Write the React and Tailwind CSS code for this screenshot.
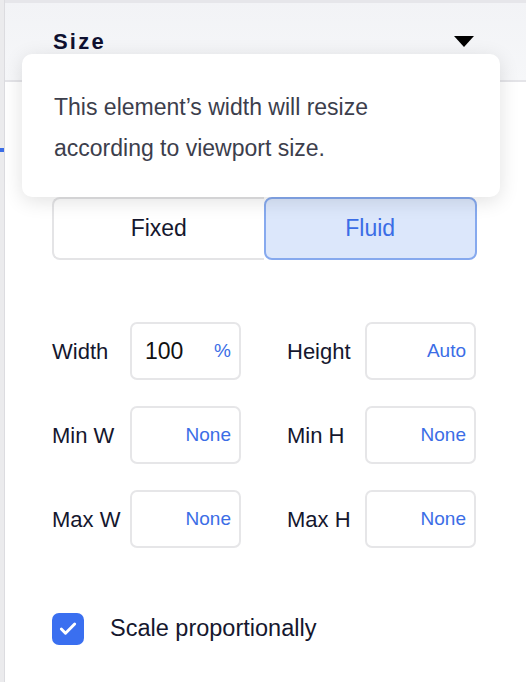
import { Check } from 'lucide-react'

function Field({ label, value, unit, placeholder }) {
  return (
    <div className="flex items-center">
      <span className="w-[78px] text-[22px] text-[#15172e]">{label}</span>
      <div className="flex h-[58px] w-[111px] items-center justify-between rounded-[7px] border-2 border-[#e6e6e8] bg-white pl-[13px] pr-[8px]">
        <span className="text-[23px] text-[#111]">{value}</span>
        <span className="text-[19px] text-[#3b6de6]">{unit || placeholder}</span>
      </div>
    </div>
  )
}

export default function App() {
  return (
    <div className="relative flex h-[682px] w-[526px] overflow-hidden bg-white font-['Liberation_Sans',Arial,sans-serif]">
      {/* left edge strip */}
      <div className="flex w-[4px] flex-col bg-[#ebebed]">
        <div className="mt-[148px] h-[4px] w-[4px] bg-[#3b6de6]" />
      </div>

      <div className="flex flex-1 flex-col border-l border-[#dcdce0]">
        {/* header */}
        <div className="flex h-[82px] items-center justify-between border-t-[3px] border-b-2 border-t-[#e6e6ea] border-b-[#e4e4e8] bg-gradient-to-b from-[#f2f3f6] to-[#f6f7f9] pl-[48px] pr-[52px]">
          <span className="text-[22px] font-bold tracking-[2.2px] text-[#0e1030]">Size</span>
          <svg width="20" height="11" viewBox="0 0 20 11">
            <path d="M0 0 H20 L10 11 Z" fill="#000" />
          </svg>
        </div>

        {/* body */}
        <div className="flex flex-col px-[47px] pt-[115px]">
          <div className="flex h-[63px] w-[425px]">
            <div className="flex flex-1 items-center justify-center rounded-l-[8px] border-2 border-r-0 border-[#e4e4e6] text-[23px] text-[#15172e]">
              Fixed
            </div>
            <div className="flex flex-1 items-center justify-center rounded-[8px] border-2 border-[#86a9ee] bg-[#dce7fb] text-[23px] text-[#3b6de6]">
              Fluid
            </div>
          </div>

          <div className="mt-[62px] grid grid-cols-2 gap-x-[43px] gap-y-[26px]">
            <Field label="Width" value="100" unit="%" />
            <Field label="Height" placeholder="Auto" />
            <Field label="Min W" placeholder="None" />
            <Field label="Min H" placeholder="None" />
            <Field label="Max W" placeholder="None" />
            <Field label="Max H" placeholder="None" />
          </div>

          <div className="mt-[63px] flex items-center gap-[26px]">
            <div className="flex h-[32px] w-[32px] items-center justify-center rounded-[7px] bg-[#3a6ff0]">
              <Check size={20} strokeWidth={3.5} color="#fff" />
            </div>
            <span className="text-[23.5px] text-[#15172e]">Scale proportionally</span>
          </div>
        </div>
      </div>

      {/* tooltip */}
      <div className="absolute left-[22px] top-[54px] h-[143px] w-[478px] rounded-[10px] bg-white px-[32px] pt-[33px] shadow-[0_4px_20px_rgba(0,0,0,0.12)]">
        <p className="text-[23px] leading-[41px] text-[#3c3e4c]">
          This element’s width will resize
          <br />
          according to viewport size.
        </p>
      </div>
    </div>
  )
}
